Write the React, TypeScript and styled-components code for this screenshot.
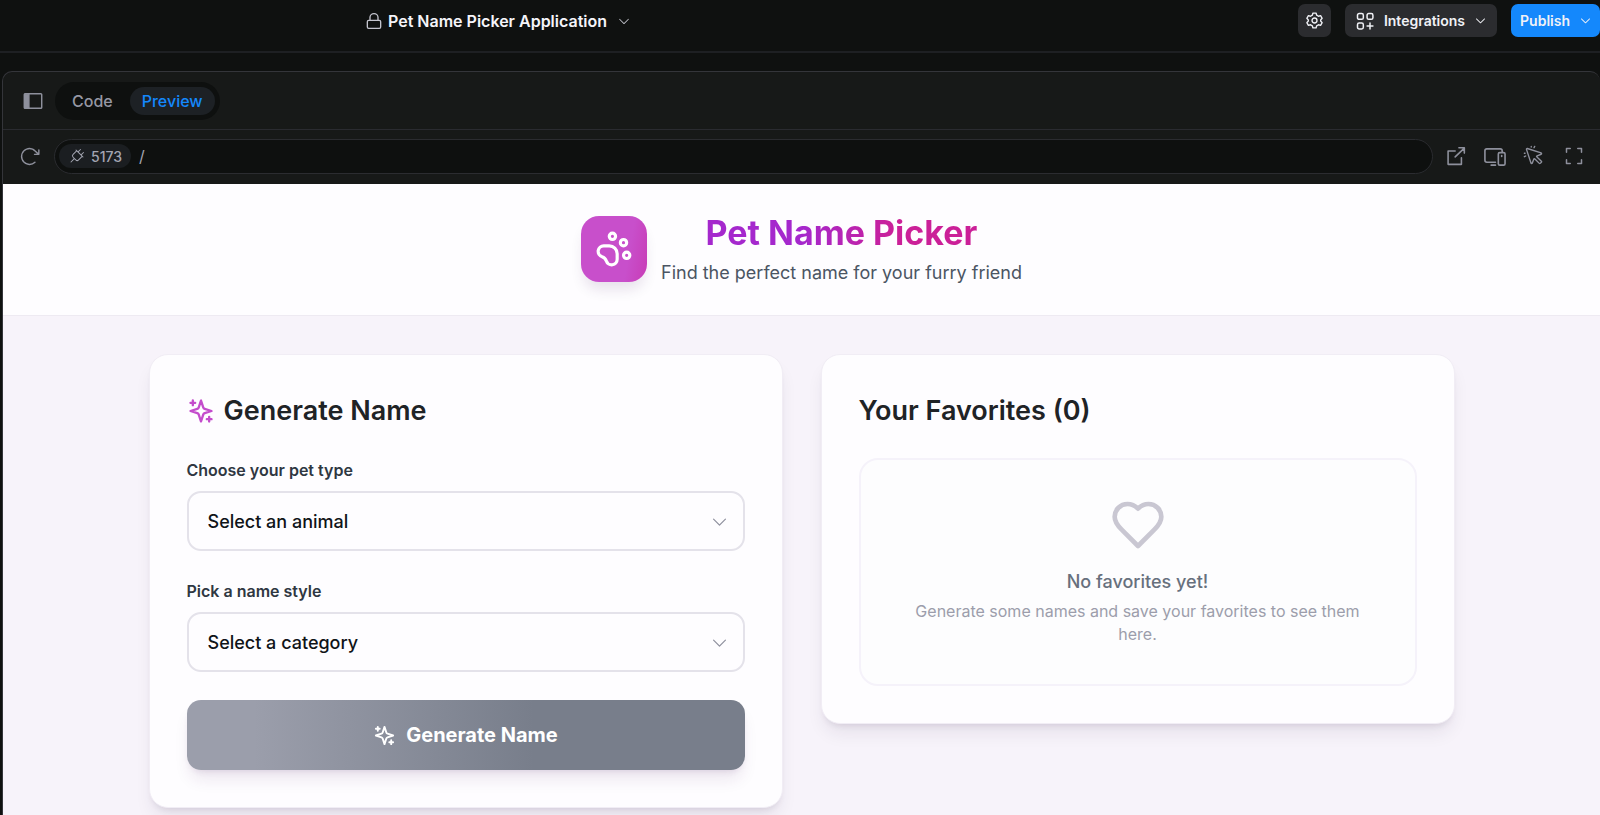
import React from "react";
import styled, { createGlobalStyle } from "styled-components";
import { PawPrint } from "lucide-react";
import {
  PiArrowClockwise,
  PiCaretDown,
  PiCornersOut,
  PiCursorClick,
  PiPlug,
} from "react-icons/pi";

const GlobalStyle = createGlobalStyle`
  *, *::before, *::after { box-sizing: border-box; }
  html, body, #root { height: 100%; }
  body {
    margin: 0;
    overflow: hidden;
    background: #0f1110;
    font-family: Inter, "Liberation Sans", sans-serif;
  }
  h1, h2, p { margin: 0; }
  button, select, input { font-family: inherit; }
  svg { display: block; flex-shrink: 0; }
`;

const Shell = styled.div`
  display: flex;
  flex-direction: column;
  height: 100%;
`;

const TopBar = styled.header`
  display: flex;
  align-items: center;
  justify-content: space-between;
  flex-shrink: 0;
  height: 53px;
  padding: 0 0 10px 366px;
  border-bottom: 2px solid #1e2023;
`;

const ProjectButton = styled.button`
  display: flex;
  align-items: center;
  gap: 6px;
  padding: 0;
  border: 0;
  background: none;
  color: #f5f5fa;
  font-size: 16px;
  font-weight: 600;
  line-height: 24px;

  svg { color: #c3c4cd; }
  svg:last-child { margin-left: 4px; }
`;

const Actions = styled.div`
  display: flex;
  align-items: center;
  gap: 14px;
`;

const ActionButton = styled.button<{ $primary?: boolean; $square?: boolean }>`
  display: flex;
  align-items: center;
  justify-content: center;
  gap: 9px;
  height: 33px;
  width: ${(p) => (p.$square ? "33px" : "auto")};
  padding: ${(p) => (p.$square ? "0" : p.$primary ? "0 8px 0 9px" : "0 10px")};
  border: 0;
  border-radius: 7px;
  background: ${(p) => (p.$primary ? "#1488fc" : "#2b2c2f")};
  color: #f0f1f6;
  font-size: 14px;
  font-weight: 600;
`;

const Workspace = styled.main`
  display: flex;
  flex-direction: column;
  flex: 1;
  min-height: 0;
  margin: 18px 0 0 2px;
  border: 1px solid #34353a;
  border-width: 1px 0 0 1px;
  border-radius: 10px 10px 0 0;
  overflow: hidden;
  background: #171918;
`;

const TabBar = styled.div`
  display: flex;
  align-items: center;
  gap: 11px;
  flex-shrink: 0;
  height: 58px;
  padding: 0 19px;
  border-bottom: 1px solid #2a2b30;
`;

const IconButton = styled.button`
  display: flex;
  align-items: center;
  justify-content: center;
  flex-shrink: 0;
  padding: 0;
  border: 0;
  background: none;
  color: #8e909c;
`;

const Tabs = styled.div`
  display: flex;
  gap: 5px;
  padding: 5px;
  border-radius: 20px;
  background: #0e100f;
`;

const Tab = styled.button<{ $active?: boolean }>`
  height: 28px;
  padding: 0 12px;
  border: 0;
  border-radius: 14px;
  background: ${(p) => (p.$active ? "#1d2125" : "transparent")};
  color: ${(p) => (p.$active ? "#1488fc" : "#9698a4")};
  font-size: 16px;
  font-weight: 500;
  line-height: 28px;
`;

const AddressBar = styled.div`
  display: flex;
  align-items: center;
  gap: 13px;
  flex-shrink: 0;
  height: 54px;
  padding: 0 14px 2px 15px;
`;

const AddressField = styled.div`
  display: flex;
  align-items: center;
  flex: 1;
  gap: 8px;
  height: 35px;
  padding: 0 5px 0 4px;
  border: 1px solid #2b2c30;
  border-radius: 18px;
  background: #0e100f;
`;

const Port = styled.button`
  display: flex;
  align-items: center;
  gap: 6px;
  height: 24px;
  padding: 0 9px 0 10px;
  border: 0;
  border-radius: 12px;
  background: #1b1e21;
  color: #a3a5b1;
  font-size: 14px;
  font-weight: 500;
`;

const PathInput = styled.input`
  flex: 1;
  min-width: 0;
  padding: 0;
  border: 0;
  outline: 0;
  background: none;
  color: #a3a5b1;
  font-size: 16px;
`;

const Tools = styled.div`
  display: flex;
  align-items: center;
  gap: 17px;
`;

const Page = styled.div`
  flex: 1;
  min-height: 0;
  overflow: hidden;
  background: #f7f3fa;
`;

const Hero = styled.div`
  display: flex;
  align-items: center;
  justify-content: center;
  gap: 14px;
  height: 132px;
  padding-bottom: 1px;
  border-bottom: 1px solid #eeeaf2;
  background: #fefdff;
`;

const Logo = styled.div`
  display: flex;
  align-items: center;
  justify-content: center;
  width: 66px;
  height: 66px;
  border-radius: 18px;
  background: linear-gradient(100deg, #c84fcb 70%, #c83cb6);
  color: #fff;
  box-shadow: 0 10px 14px -3px rgba(60, 20, 80, 0.12);
`;

const HeroText = styled.div`
  display: flex;
  flex-direction: column;
  align-items: center;
  gap: 4px;
`;

const Brand = styled.h1`
  background: linear-gradient(90deg, #a528cd 35%, #cb2098 70%);
  background-clip: text;
  -webkit-background-clip: text;
  color: transparent;
  font-size: 34px;
  font-weight: 700;
  line-height: 44px;
`;

const Tagline = styled.p`
  color: #4b5563;
  font-size: 18px;
  line-height: 28px;
`;

const Columns = styled.div`
  display: grid;
  grid-template-columns: 1fr 1fr;
  align-items: start;
  gap: 38px;
  max-width: 1306px;
  margin: 0 auto;
  padding: 38px 0;
`;

const Card = styled.section`
  padding: 37px;
  border: 1px solid #f1edf5;
  border-radius: 19px;
  background: #fefdff;
  box-shadow: 0 12px 18px -3px rgba(40, 20, 60, 0.08), 0 5px 7px -4px rgba(40, 20, 60, 0.12);
`;

const CardTitle = styled.h2`
  display: flex;
  align-items: center;
  gap: 9px;
  margin-bottom: 28px;
  color: #1f2326;
  font-size: 27px;
  font-weight: 600;
  line-height: 38px;

  svg { color: #c44ccc; }
`;

const Field = styled.div`
  margin-bottom: 28px;
`;

const Label = styled.label`
  display: block;
  margin-bottom: 9px;
  color: #2f3742;
  font-size: 16px;
  font-weight: 600;
  line-height: 24px;
`;

const SelectBox = styled.div`
  display: grid;
  align-items: center;

  > * { grid-area: 1 / 1; }

  svg {
    justify-self: end;
    margin-right: 16px;
    color: #8f909e;
    pointer-events: none;
  }
`;

const Select = styled.select`
  appearance: none;
  width: 100%;
  height: 60px;
  padding: 0 19px;
  border: 2px solid #e4e2ea;
  border-radius: 14px;
  background: #fefdff;
  color: #101418;
  font-size: 18px;
  font-weight: 500;
`;

const GenerateButton = styled.button`
  display: flex;
  align-items: center;
  justify-content: center;
  gap: 10px;
  width: 100%;
  height: 70px;
  border: 0;
  border-radius: 14px;
  background: linear-gradient(90deg, #9b9eab 12%, #787e8b 62%);
  color: #fff;
  font-size: 20px;
  font-weight: 700;
  box-shadow: 0 12px 16px -3px rgba(80, 30, 100, 0.1), 0 4px 7px -4px rgba(80, 30, 100, 0.16);
`;

const EmptyState = styled.div`
  display: flex;
  flex-direction: column;
  align-items: center;
  padding: 37px 48px 38px;
  border: 2px solid #f5f2fa;
  border-radius: 19px;
  background: #fdfdfe;
  text-align: center;

  svg { color: #c9c7d2; }
`;

const EmptyTitle = styled.p`
  margin: 15px 0 4px;
  color: #67707d;
  font-size: 18px;
  font-weight: 500;
  line-height: 28px;
`;

const EmptyText = styled.p`
  color: #9c9dab;
  font-size: 16px;
  line-height: 23px;
`;

type LineIconProps = { size: number; stroke?: number; children: React.ReactNode };

const LineIcon = ({ size, stroke = 2, children }: LineIconProps) => (
  <svg
    width={size}
    height={size}
    viewBox="0 0 24 24"
    fill="none"
    stroke="currentColor"
    strokeWidth={stroke}
    strokeLinecap="round"
    strokeLinejoin="round"
    aria-hidden="true"
  >
    {children}
  </svg>
);

const LockIcon = () => (
  <LineIcon size={16} stroke={2}>
    <rect x="2" y="11" width="20" height="12" rx="2" />
    <path d="M6 11V6.500a6 5.500 0 0 1 12 0V11" />
  </LineIcon>
);

const AppsIcon = () => (
  <LineIcon size={20} stroke={1.8}>
    <rect x="3" y="3" width="7" height="7" rx="2" />
    <rect x="14.500" y="3" width="7" height="7" rx="2" />
    <rect x="3" y="14.500" width="7" height="7" rx="2" />
    <path d="M18 14.500v7M14.500 18h7" />
  </LineIcon>
);

const GearIcon = () => (
  <LineIcon size={17} stroke={1.9}>
    <path d="M9.800 1.500h4.400l.9 3 2.500 1.500 3-.8 2.200 3.700-2.100 2.300v1.600l2.100 2.300-2.200 3.700-3-.8-2.500 1.500-.9 3H9.800l-.9-3L6.400 18l-3 .8-2.200-3.700 2.100-2.300v-1.600L1.200 8.900l2.200-3.700 3 .8 2.500-1.500z" />
    <circle cx="12" cy="12" r="3.500" />
  </LineIcon>
);

const SidebarIcon = () => (
  <LineIcon size={22} stroke={1.6}>
    <rect x="2.500" y="4" width="19" height="16" rx="1" />
    <path d="M3 4.500h4.500v15H3z" fill="currentColor" />
  </LineIcon>
);

const OpenIcon = () => (
  <LineIcon size={20} stroke={1.9}>
    <path d="M11 6H2.500v16h16v-8" />
    <path d="M11 13 22 2.500M15.500 2H22v6.500" />
  </LineIcon>
);

const DevicesIcon = () => (
  <LineIcon size={23} stroke={1.7}>
    <path d="M13 18H4a2 2 0 0 1-2-2V6a2 2 0 0 1 2-2h14a2 2 0 0 1 2 2v1.500" />
    <rect x="16" y="8" width="7" height="13" rx="1.500" />
    <path d="M8.500 21h4.500M19.500 11v1" />
  </LineIcon>
);

const SparklesIcon = ({ size }: { size: number }) => (
  <LineIcon size={size}>
    <path d="m12 3-1.912 5.813a2 2 0 0 1-1.275 1.275L3 12l5.813 1.912a2 2 0 0 1 1.275 1.275L12 21l1.912-5.813a2 2 0 0 1 1.275-1.275L21 12l-5.813-1.912a2 2 0 0 1-1.275-1.275L12 3Z" />
    <path d="M5 3v4M19 17v4M3 5h4M17 19h4" />
  </LineIcon>
);

const HeartIcon = () => (
  <LineIcon size={56}>
    <path d="M19 14c1.490-1.460 3-3.210 3-5.500A5.500 5.500 0 0 0 16.500 3c-1.760 0-3 .5-4.500 2-1.500-1.500-2.740-2-4.500-2A5.500 5.500 0 0 0 2 8.500c0 2.300 1.500 4.050 3 5.500l7 7Z" />
  </LineIcon>
);

type PickerProps = { id: string; label: string; placeholder: string };

const Picker = ({ id, label, placeholder }: PickerProps) => (
  <Field>
    <Label htmlFor={id}>{label}</Label>
    <SelectBox>
      <Select id={id} defaultValue="">
        <option value="">{placeholder}</option>
      </Select>
      <PiCaretDown size={19} />
    </SelectBox>
  </Field>
);

export default function App() {
  return (
    <Shell>
      <GlobalStyle />
      <TopBar>
        <ProjectButton>
          <LockIcon />
          Pet Name Picker Application
          <PiCaretDown size={14} />
        </ProjectButton>
        <Actions>
          <ActionButton $square aria-label="Settings">
            <GearIcon />
          </ActionButton>
          <ActionButton>
            <AppsIcon />
            Integrations
            <PiCaretDown size={13} />
          </ActionButton>
          <ActionButton $primary>
            Publish
            <PiCaretDown size={13} />
          </ActionButton>
        </Actions>
      </TopBar>
      <Workspace>
        <TabBar>
          <IconButton aria-label="Toggle sidebar">
            <SidebarIcon />
          </IconButton>
          <Tabs>
            <Tab>Code</Tab>
            <Tab $active>Preview</Tab>
          </Tabs>
        </TabBar>
        <AddressBar>
          <IconButton aria-label="Reload">
            <PiArrowClockwise size={23} />
          </IconButton>
          <AddressField>
            <Port>
              <PiPlug size={16} />
              5173
            </Port>
            <PathInput aria-label="Path" defaultValue="/" />
          </AddressField>
          <Tools>
            <IconButton aria-label="Open in new tab">
              <OpenIcon />
            </IconButton>
            <IconButton aria-label="Device preview">
              <DevicesIcon />
            </IconButton>
            <IconButton aria-label="Inspect">
              <PiCursorClick size={22} />
            </IconButton>
            <IconButton aria-label="Full screen">
              <PiCornersOut size={24} />
            </IconButton>
          </Tools>
        </AddressBar>
        <Page>
          <Hero>
            <Logo>
              <PawPrint size={38} />
            </Logo>
            <HeroText>
              <Brand>Pet Name Picker</Brand>
              <Tagline>Find the perfect name for your furry friend</Tagline>
            </HeroText>
          </Hero>
          <Columns>
            <Card>
              <CardTitle>
                <SparklesIcon size={28} />
                Generate Name
              </CardTitle>
              <Picker id="pet-type" label="Choose your pet type" placeholder="Select an animal" />
              <Picker id="name-style" label="Pick a name style" placeholder="Select a category" />
              <GenerateButton>
                <SparklesIcon size={23} />
                Generate Name
              </GenerateButton>
            </Card>
            <Card>
              <CardTitle>Your Favorites (0)</CardTitle>
              <EmptyState>
                <HeartIcon />
                <EmptyTitle>No favorites yet!</EmptyTitle>
                <EmptyText>Generate some names and save your favorites to see them here.</EmptyText>
              </EmptyState>
            </Card>
          </Columns>
        </Page>
      </Workspace>
    </Shell>
  );
}
